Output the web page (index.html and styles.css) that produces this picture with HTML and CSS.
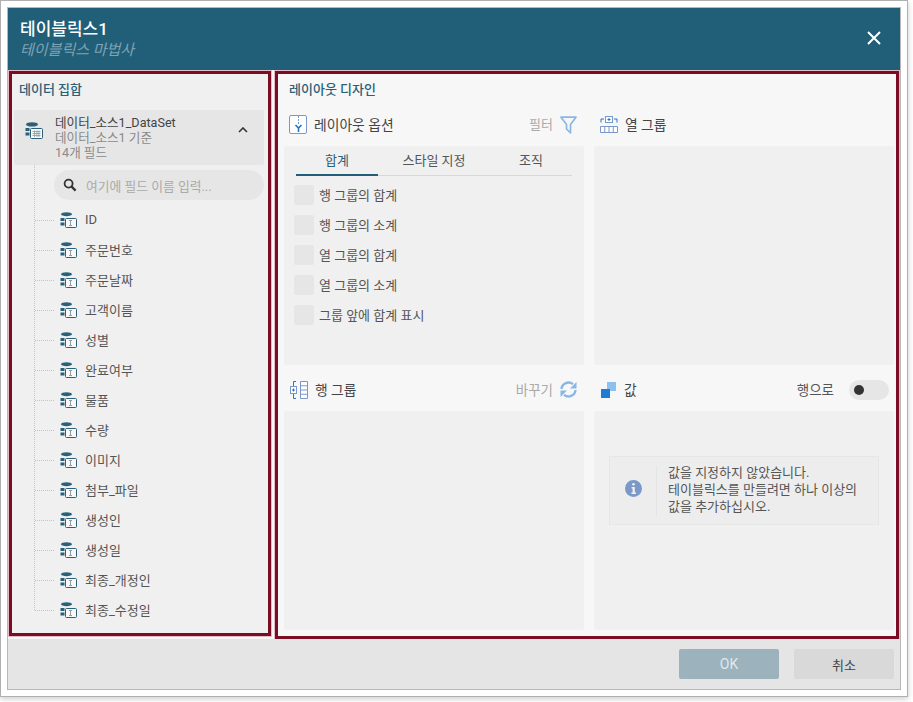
FILE: index.html
```html
<!DOCTYPE html>
<html lang="ko">
<head>
<meta charset="utf-8">
<title>테이블릭스 마법사</title>
<link rel="stylesheet" href="styles.css">
</head>
<body>
<svg class="defs" width="0" height="0" aria-hidden="true">
  <symbol id="field" viewBox="0 0 17 16">
    <ellipse cx="6.5" cy="2.2" rx="5.5" ry="2" fill="#2a6078"/>
    <path d="M0.5 6h4v3h-4zM0.5 10.5h4v3h-4z" fill="#2a6078"/>
    <rect x="5.5" y="6.5" width="11" height="9" rx="1" fill="#f7f9fa" stroke="#2a6078"/>
    <path d="M9 8.5h3M10.5 8.5v5M9 13.5h3" fill="none" stroke="#9a9a9a"/>
  </symbol>
</svg>
<div class="frame">
  <div class="dialog">
    <header class="head">
      <div>
        <div class="head-title">테이블릭스1</div>
        <div class="head-sub">테이블릭스 마법사</div>
      </div>
      <svg class="close" width="16" height="16" viewBox="0 0 16 16"><path d="M2 2l12 12M14 2L2 14" stroke="#fff" stroke-width="2" fill="none"/></svg>
    </header>
    <main class="main">
      <section class="data">
        <h2 class="sec-title">데이터 집합</h2>
        <div class="source">
          <svg class="source-icon" width="18" height="17" viewBox="0 0 18 17">
            <ellipse cx="7" cy="2.4" rx="6" ry="2.2" fill="#2a6078"/>
            <path d="M0.5 6h4v3h-4zM0.5 10.5h4v3h-4z" fill="#2a6078"/>
            <rect x="5.5" y="6.5" width="12" height="10" rx="1" fill="#f7f9fa" stroke="#2a6078"/>
            <path d="M7.5 9.5h8M7.5 11.5h8M7.5 13.5h8M9.5 8.5v6.5M12 8.5v6.5M14 8.5v6.5" stroke="#9aa7ad" fill="none"/>
          </svg>
          <div class="source-text">
            <div class="source-name">데이터_소스1_DataSet</div>
            <div>데이터_소스1 기준</div>
            <div>14개 필드</div>
          </div>
          <svg class="chev" width="10" height="6" viewBox="0 0 10 6"><path d="M1 5l4-4 4 4" stroke="#333" stroke-width="1.6" fill="none"/></svg>
        </div>
        <div class="tree">
          <div class="search">
            <svg width="14" height="14" viewBox="0 0 14 14"><circle cx="5.6" cy="5.6" r="4" fill="none" stroke="#333" stroke-width="1.8"/><path d="M8.6 8.6l4 4" stroke="#333" stroke-width="2.2"/></svg>
            <span>여기에 필드 이름 입력...</span>
          </div>
          <ul class="fields">
            <li><svg width="17" height="16"><use href="#field"/></svg>ID</li>
            <li><svg width="17" height="16"><use href="#field"/></svg>주문번호</li>
            <li><svg width="17" height="16"><use href="#field"/></svg>주문날짜</li>
            <li><svg width="17" height="16"><use href="#field"/></svg>고객이름</li>
            <li><svg width="17" height="16"><use href="#field"/></svg>성별</li>
            <li><svg width="17" height="16"><use href="#field"/></svg>완료여부</li>
            <li><svg width="17" height="16"><use href="#field"/></svg>물품</li>
            <li><svg width="17" height="16"><use href="#field"/></svg>수량</li>
            <li><svg width="17" height="16"><use href="#field"/></svg>이미지</li>
            <li><svg width="17" height="16"><use href="#field"/></svg>첨부_파일</li>
            <li><svg width="17" height="16"><use href="#field"/></svg>생성인</li>
            <li><svg width="17" height="16"><use href="#field"/></svg>생성일</li>
            <li><svg width="17" height="16"><use href="#field"/></svg>최종_개정인</li>
            <li><svg width="17" height="16"><use href="#field"/></svg>최종_수정일</li>
          </ul>
        </div>
      </section>
      <section class="layout">
        <h2 class="sec-title">레이아웃 디자인</h2>
        <div class="grid">
          <div class="pane">
            <div class="pane-head">
              <svg width="18" height="19" viewBox="0 0 18 19"><rect x="0.5" y="0.5" width="17" height="18" rx="1.5" fill="#fff" stroke="#7a99c9"/><path d="M9.5 1v8" stroke="#7a99c9" stroke-dasharray="2 1" fill="none"/><path d="M6.5 10l3 3 3-3M9.5 13v4" stroke="#1f78c8" stroke-width="1.6" fill="none"/></svg>
              <span class="pane-name">레이아웃 옵션</span>
              <span class="pane-action">필터</span>
              <svg width="17" height="18" viewBox="0 0 17 18"><path d="M1 1.2h15L10.5 8.5v8.3L6.5 13V8.5z" fill="none" stroke="#8ab7e3" stroke-width="1.7" stroke-linejoin="round"/></svg>
            </div>
            <div class="pane-body">
              <div class="tabs">
                <div class="tab tab-on">합계</div>
                <div class="tab tab-wide">스타일 지정</div>
                <div class="tab">조직</div>
              </div>
              <div class="check-row"><i class="check"></i>행 그룹의 합계</div>
              <div class="check-row"><i class="check"></i>행 그룹의 소계</div>
              <div class="check-row"><i class="check"></i>열 그룹의 합계</div>
              <div class="check-row"><i class="check"></i>열 그룹의 소계</div>
              <div class="check-row"><i class="check"></i>그룹 앞에 합계 표시</div>
            </div>
          </div>
          <div class="pane pane-right">
            <div class="pane-head">
              <svg width="18" height="17" viewBox="0 0 18 17"><path d="M1 6.5V3h3M17 6.5V3h-3" stroke="#1f78c8" fill="none"/><rect x="5.5" y="0.5" width="7" height="6" fill="#fff" stroke="#7a99c9"/><path d="M7.5 3.5h3M9 2v3" stroke="#1f78c8"/><path d="M0.5 10.5h17v6H0.5zM4.75 10.5v6M9 10.5v6M13.25 10.5v6" fill="#fff" stroke="#7a99c9"/></svg>
              <span class="pane-name">열 그룹</span>
            </div>
            <div class="pane-body"></div>
          </div>
          <div class="pane pane-low">
            <div class="pane-head">
              <svg width="18" height="18" viewBox="0 0 18 18"><path d="M6 0.5H3.5v5M6 17.5H3.5v-5" stroke="#1f78c8" fill="none"/><rect x="0.5" y="5.5" width="6" height="7" fill="#fff" stroke="#7a99c9"/><path d="M2 9h3M3.5 7.5v3" stroke="#1f78c8"/><path d="M10.5 0.5h7v17h-7zM10.5 4.75h7M10.5 9h7M10.5 13.25h7" fill="#fff" stroke="#7a99c9"/></svg>
              <span class="pane-name">행 그룹</span>
              <span class="pane-action">바꾸기</span>
              <svg width="17" height="17" viewBox="0 0 17 17"><path d="M1.5 8A7 7 0 0 1 13 3.2" fill="none" stroke="#8ab7e3" stroke-width="2.400"/><path d="M16.500 1v6.500h-6.500z" fill="#8ab7e3"/><path d="M15.500 9A7 7 0 0 1 4 13.800" fill="none" stroke="#8ab7e3" stroke-width="2.400"/><path d="M0.500 16v-6.500h6.500z" fill="#8ab7e3"/></svg>
            </div>
            <div class="pane-body"></div>
          </div>
          <div class="pane pane-low pane-right">
            <div class="pane-head">
              <svg width="16" height="16" viewBox="0 0 16 16"><rect x="6" y="0" width="9" height="9" fill="#8cc0f0"/><rect x="0" y="7" width="9" height="9" fill="#1f7bd6"/></svg>
              <span class="pane-name">값</span>
              <span class="pane-action pane-action-dark">행으로</span>
              <span class="toggle"><i class="knob"></i></span>
            </div>
            <div class="pane-body pane-center">
              <div class="info">
                <span class="info-icon">
                  <svg width="17" height="17" viewBox="0 0 17 17"><circle cx="8.5" cy="8.5" r="8.5" fill="#7a99c9"/><rect x="7.2" y="3" width="2.6" height="2.6" rx="1.3" fill="#f0f0f0"/><path d="M6.600 7h3.200v5.500h1.200V14H6.400v-1.500h1.200V8.400H6.600z" fill="#f0f0f0"/></svg>
                </span>
                <div class="info-text">값을 지정하지 않았습니다.<br>테이블릭스를 만들려면 하나 이상의<br>값을 추가하십시오.</div>
              </div>
            </div>
          </div>
        </div>
      </section>
    </main>
    <footer class="foot">
      <button class="btn btn-ok" type="button">OK</button>
      <button class="btn" type="button">취소</button>
    </footer>
  </div>
</div>
</body>
</html>
```
FILE: styles.css
```css
* { box-sizing: border-box; }
html, body { margin: 0; padding: 0; background: #fff; }
body {
  width: 913px;
  height: 702px;
  overflow: hidden;
  font-family: Roboto, "Noto Sans CJK KR", sans-serif;
  font-size: 13px;
  color: #444;
}
.defs { position: absolute; }
.frame {
  width: 908px;
  height: 697px;
  border: 1px solid #b0b0b0;
  padding: 6px;
  background: #fff;
  box-shadow: 0 2px 6px rgba(0, 0, 0, .2);
}
.dialog {
  width: 894px;
  height: 683px;
  border: 1px solid #b8b8b8;
  display: flex;
  flex-direction: column;
  background: #f7f7f7;
}
.head {
  flex: none;
  height: 62px;
  background: #215f78;
  padding: 11px 18px 0 12px;
  display: flex;
  justify-content: space-between;
  align-items: flex-start;
}
.head-title { color: #fff; font-size: 17px; font-weight: 500; line-height: 20px; }
.head-sub { color: #7fa3b4; font-size: 15px; font-style: italic; line-height: 20px; margin-top: 1px; }
.close { margin-top: 11px; }
.main {
  flex: none;
  height: 569px;
  display: flex;
  align-items: flex-start;
  gap: 4px;
  padding: 1px 1px 0 1px;
}
.sec-title {
  margin: 0;
  font-size: 13px;
  font-weight: 500;
  line-height: 16px;
  color: #2a6078;
}
.data {
  flex: none;
  width: 262px;
  height: 565px;
  border: 3px solid #7a0c26;
  box-shadow: 0 0 0 1px #e3bcc6;
  background: #f0f0f0;
  padding: 8px 4px 0 2px;
}
.data .sec-title { margin-left: 5px; height: 28px; }
.source {
  height: 55px;
  background: #e6e6e6;
  border-radius: 2px;
  display: flex;
  align-items: flex-start;
  padding: 5px 16px 0 11px;
  font-size: 12.6px;
  line-height: 15px;
  color: #8a8a8a;
}
.source-icon { margin-top: 7px; flex: none; }
.source-text { margin-left: 12px; flex: 1; }
.source-name { color: #444; }
.chev { margin-top: 12px; }
.tree {
  position: relative;
  padding-left: 40px;
  padding-top: 5px;
}
.tree::before {
  content: "";
  position: absolute;
  left: 20px;
  top: 0;
  height: 445px;
  border-left: 1px dotted #c4c4c4;
}
.search {
  height: 30px;
  border-radius: 15px;
  background: #e6e6e6;
  display: flex;
  align-items: center;
  gap: 9px;
  padding-left: 9px;
  font-size: 12.8px;
  color: #aaa;
}
.fields { list-style: none; margin: 5px 0 0; padding: 0; }
.fields li {
  position: relative;
  height: 30px;
  display: flex;
  align-items: center;
  gap: 8px;
  padding: 0 0 2px 6px;
  font-size: 13px;
  color: #555;
}
.fields svg { margin-top: 2px; }
.fields li::before {
  content: "";
  position: absolute;
  left: -19px;
  top: 15px;
  width: 19px;
  border-top: 1px dotted #c4c4c4;
}
.layout {
  flex: none;
  width: 624px;
  height: 568px;
  border: 3px solid #7a0c26;
  box-shadow: 0 0 0 1px #e3bcc6;
  background: #f7f7f7;
  padding: 8px 3px 0 6px;
}
.layout .sec-title { margin-left: 5px; height: 28px; }
.grid {
  display: grid;
  grid-template-columns: 300px 300px;
  column-gap: 10px;
}
.pane { display: flex; flex-direction: column; height: 255px; }
.pane-low { height: 265px; }
.pane-head {
  height: 36px;
  flex: none;
  display: flex;
  align-items: center;
  padding: 0 7px 7px 5px;
}
.pane-low .pane-head { height: 46px; padding: 3px 7px 0 6px; }
.pane-right .pane-head { padding-left: 6px; }
.pane-low.pane-right .pane-head { padding-right: 5px; padding-left: 7px; }
.pane-name { margin: -2px 0 0 7px; flex: 1; font-size: 13.8px; color: #444; }
.pane-action { margin: -2px 7px 0 0; font-size: 13px; color: #aaa; }
.pane-low .pane-action { font-size: 13.5px; }
.pane-low .pane-action-dark { color: #555; margin-right: 15px; }
.pane-body { flex: 1; background: #f0f0f0; border-radius: 2px; padding: 0 10px; }
.pane-center { display: flex; align-items: flex-start; justify-content: center; padding: 45px 15px 0; }
.tabs {
  display: flex;
  margin: 0 2px 4px;
  border-bottom: 1px solid #d8d8d8;
  height: 30px;
}
.tab {
  width: 82px;
  height: 30px;
  text-align: center;
  line-height: 30px;
  font-size: 13px;
  color: #555;
}
.tab-wide { width: 112px; }
.tab-on { color: #2a6078; border-bottom: 2px solid #215f78; }
.check-row {
  height: 30px;
  display: flex;
  align-items: center;
  gap: 5px;
  padding-bottom: 2px;
  font-size: 13px;
  color: #555;
}
.check { display: block; width: 20px; height: 20px; margin-top: 2px; background: #e6e6e6; border-radius: 2px; }
.toggle {
  width: 40px;
  height: 20px;
  background: #e6e6e6;
  border-radius: 10px;
  display: flex;
  align-items: center;
  padding-left: 5px;
}
.knob { display: block; width: 10px; height: 10px; border-radius: 50%; background: #333; }
.info {
  width: 270px;
  height: 69px;
  border: 1px solid #e6e6e6;
  background: #ededed;
  display: flex;
  align-items: center;
}
.info-icon {
  width: 47px;
  height: 50px;
  border-right: 1px solid #e4e4e4;
  display: flex;
  align-items: center;
  justify-content: center;
}
.info-icon svg { margin-bottom: 4px; }
.info-text { margin: 0 0 2px 11px; font-size: 13px; line-height: 17px; color: #555; white-space: nowrap; }
.foot {
  flex: 1;
  background: #e5e5e5;
  display: flex;
  justify-content: flex-end;
  gap: 15px;
  padding: 10px 6px 0 0;
}
.btn {
  width: 100px;
  height: 30px;
  border: 0;
  border-radius: 2px;
  background: #d9d9d9;
  font: 13px Roboto, "Noto Sans CJK KR", sans-serif;
  color: #444;
  padding: 0;
}
.btn-ok { background: #9cb2bd; color: #dfe8ec; font-size: 14px; }
```
